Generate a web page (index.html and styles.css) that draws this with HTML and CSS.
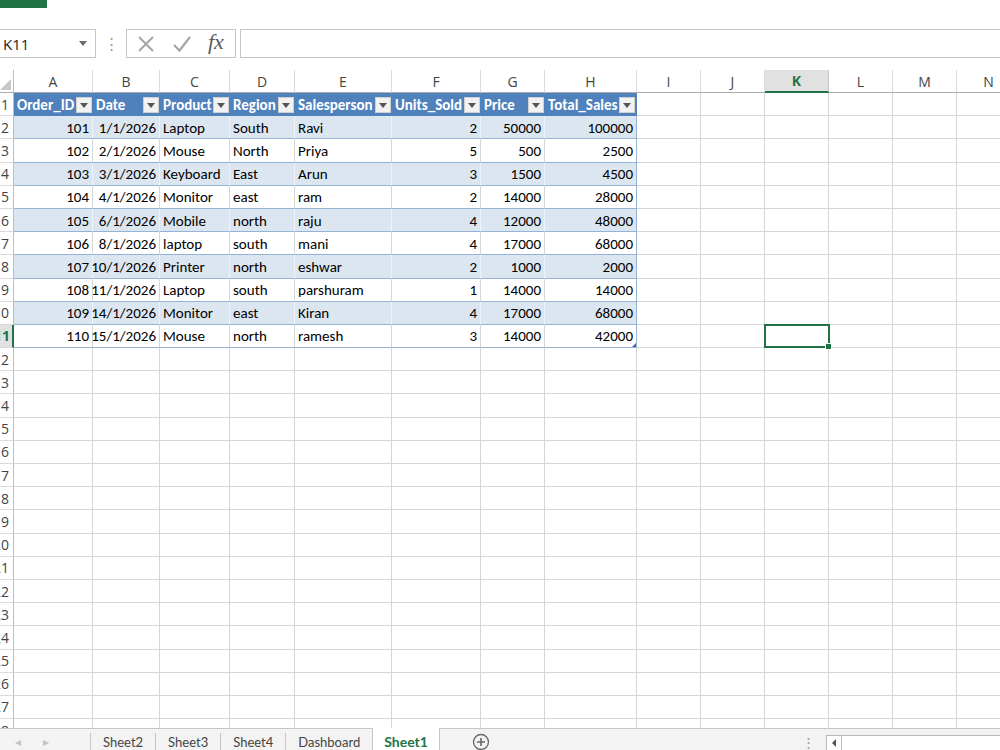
FILE: index.html
```html
<!DOCTYPE html>
<html>
<head>
<meta charset="utf-8">
<link rel="stylesheet" href="styles.css">
</head>
<body>
<div class="app">
  <div class="ribbon"><div class="brand"></div></div>
  <div class="fbar">
    <div class="namebox"><span>K11</span><span class="nb-arrow"></span></div>
    <div class="grip">⋮</div>
    <div class="fbtns">
      <svg class="ico" width="20" height="20" viewBox="0 0 20 20"><path d="M3 3 L17 17 M17 3 L3 17" stroke="#a6a6a6" stroke-width="2" fill="none"/></svg>
      <svg class="ico" width="20" height="20" viewBox="0 0 20 20"><path d="M2 11 L7.5 16.5 L18 3" stroke="#a6a6a6" stroke-width="2.2" fill="none"/></svg>
      <span class="fx">fx</span>
    </div>
    <div class="finput"></div>
  </div>
  <div class="sheet">
    <div class="row colhdr">
      <div class="corner"></div>
      <div class="ch">A</div><div class="ch">B</div><div class="ch">C</div><div class="ch">D</div><div class="ch">E</div><div class="ch">F</div><div class="ch">G</div><div class="ch">H</div><div class="ch">I</div><div class="ch">J</div><div class="ch sel">K</div><div class="ch">L</div><div class="ch">M</div><div class="ch">N</div>
    </div>
    <div class="row">
      <div class="rh">1</div>
      <div class="hd"><span>Order_ID</span><span class="fb"></span></div>
      <div class="hd"><span>Date</span><span class="fb"></span></div>
      <div class="hd"><span>Product</span><span class="fb"></span></div>
      <div class="hd"><span>Region</span><span class="fb"></span></div>
      <div class="hd"><span>Salesperson</span><span class="fb"></span></div>
      <div class="hd"><span>Units_Sold</span><span class="fb"></span></div>
      <div class="hd"><span>Price</span><span class="fb"></span></div>
      <div class="hd last"><span>Total_Sales</span><span class="fb"></span></div>
      <div class="c"></div><div class="c"></div><div class="c"></div><div class="c"></div><div class="c"></div><div class="c"></div>
    </div>
    <div class="row band">
      <div class="rh">2</div>
      <div class="t n">101</div><div class="t n">1/1/2026</div><div class="t">Laptop</div><div class="t">South</div><div class="t">Ravi</div><div class="t n">2</div><div class="t n">50000</div><div class="t n last">100000</div>
      <div class="c"></div><div class="c"></div><div class="c"></div><div class="c"></div><div class="c"></div><div class="c"></div>
    </div>
    <div class="row">
      <div class="rh">3</div>
      <div class="t n">102</div><div class="t n">2/1/2026</div><div class="t">Mouse</div><div class="t">North</div><div class="t">Priya</div><div class="t n">5</div><div class="t n">500</div><div class="t n last">2500</div>
      <div class="c"></div><div class="c"></div><div class="c"></div><div class="c"></div><div class="c"></div><div class="c"></div>
    </div>
    <div class="row band">
      <div class="rh">4</div>
      <div class="t n">103</div><div class="t n">3/1/2026</div><div class="t">Keyboard</div><div class="t">East</div><div class="t">Arun</div><div class="t n">3</div><div class="t n">1500</div><div class="t n last">4500</div>
      <div class="c"></div><div class="c"></div><div class="c"></div><div class="c"></div><div class="c"></div><div class="c"></div>
    </div>
    <div class="row">
      <div class="rh">5</div>
      <div class="t n">104</div><div class="t n">4/1/2026</div><div class="t">Monitor</div><div class="t">east</div><div class="t">ram</div><div class="t n">2</div><div class="t n">14000</div><div class="t n last">28000</div>
      <div class="c"></div><div class="c"></div><div class="c"></div><div class="c"></div><div class="c"></div><div class="c"></div>
    </div>
    <div class="row band">
      <div class="rh">6</div>
      <div class="t n">105</div><div class="t n">6/1/2026</div><div class="t">Mobile</div><div class="t">north</div><div class="t">raju</div><div class="t n">4</div><div class="t n">12000</div><div class="t n last">48000</div>
      <div class="c"></div><div class="c"></div><div class="c"></div><div class="c"></div><div class="c"></div><div class="c"></div>
    </div>
    <div class="row">
      <div class="rh">7</div>
      <div class="t n">106</div><div class="t n">8/1/2026</div><div class="t">laptop</div><div class="t">south</div><div class="t">mani</div><div class="t n">4</div><div class="t n">17000</div><div class="t n last">68000</div>
      <div class="c"></div><div class="c"></div><div class="c"></div><div class="c"></div><div class="c"></div><div class="c"></div>
    </div>
    <div class="row band">
      <div class="rh">8</div>
      <div class="t n">107</div><div class="t n">10/1/2026</div><div class="t">Printer</div><div class="t">north</div><div class="t">eshwar</div><div class="t n">2</div><div class="t n">1000</div><div class="t n last">2000</div>
      <div class="c"></div><div class="c"></div><div class="c"></div><div class="c"></div><div class="c"></div><div class="c"></div>
    </div>
    <div class="row">
      <div class="rh">9</div>
      <div class="t n">108</div><div class="t n">11/1/2026</div><div class="t">Laptop</div><div class="t">south</div><div class="t">parshuram</div><div class="t n">1</div><div class="t n">14000</div><div class="t n last">14000</div>
      <div class="c"></div><div class="c"></div><div class="c"></div><div class="c"></div><div class="c"></div><div class="c"></div>
    </div>
    <div class="row band">
      <div class="rh">10</div>
      <div class="t n">109</div><div class="t n">14/1/2026</div><div class="t">Monitor</div><div class="t">east</div><div class="t">Kiran</div><div class="t n">4</div><div class="t n">17000</div><div class="t n last">68000</div>
      <div class="c"></div><div class="c"></div><div class="c"></div><div class="c"></div><div class="c"></div><div class="c"></div>
    </div>
    <div class="row endrow">
      <div class="rh cur">11</div>
      <div class="t n">110</div><div class="t n">15/1/2026</div><div class="t">Mouse</div><div class="t">north</div><div class="t">ramesh</div><div class="t n">3</div><div class="t n">14000</div><div class="t n last grip-end">42000</div>
      <div class="c"></div><div class="c"></div><div class="c active"></div><div class="c"></div><div class="c"></div><div class="c"></div>
    </div>
    <div class="row"><div class="rh">12</div><div class="c"></div><div class="c"></div><div class="c"></div><div class="c"></div><div class="c"></div><div class="c"></div><div class="c"></div><div class="c"></div><div class="c"></div><div class="c"></div><div class="c"></div><div class="c"></div><div class="c"></div><div class="c"></div></div>
    <div class="row"><div class="rh">13</div><div class="c"></div><div class="c"></div><div class="c"></div><div class="c"></div><div class="c"></div><div class="c"></div><div class="c"></div><div class="c"></div><div class="c"></div><div class="c"></div><div class="c"></div><div class="c"></div><div class="c"></div><div class="c"></div></div>
    <div class="row"><div class="rh">14</div><div class="c"></div><div class="c"></div><div class="c"></div><div class="c"></div><div class="c"></div><div class="c"></div><div class="c"></div><div class="c"></div><div class="c"></div><div class="c"></div><div class="c"></div><div class="c"></div><div class="c"></div><div class="c"></div></div>
    <div class="row"><div class="rh">15</div><div class="c"></div><div class="c"></div><div class="c"></div><div class="c"></div><div class="c"></div><div class="c"></div><div class="c"></div><div class="c"></div><div class="c"></div><div class="c"></div><div class="c"></div><div class="c"></div><div class="c"></div><div class="c"></div></div>
    <div class="row"><div class="rh">16</div><div class="c"></div><div class="c"></div><div class="c"></div><div class="c"></div><div class="c"></div><div class="c"></div><div class="c"></div><div class="c"></div><div class="c"></div><div class="c"></div><div class="c"></div><div class="c"></div><div class="c"></div><div class="c"></div></div>
    <div class="row"><div class="rh">17</div><div class="c"></div><div class="c"></div><div class="c"></div><div class="c"></div><div class="c"></div><div class="c"></div><div class="c"></div><div class="c"></div><div class="c"></div><div class="c"></div><div class="c"></div><div class="c"></div><div class="c"></div><div class="c"></div></div>
    <div class="row"><div class="rh">18</div><div class="c"></div><div class="c"></div><div class="c"></div><div class="c"></div><div class="c"></div><div class="c"></div><div class="c"></div><div class="c"></div><div class="c"></div><div class="c"></div><div class="c"></div><div class="c"></div><div class="c"></div><div class="c"></div></div>
    <div class="row"><div class="rh">19</div><div class="c"></div><div class="c"></div><div class="c"></div><div class="c"></div><div class="c"></div><div class="c"></div><div class="c"></div><div class="c"></div><div class="c"></div><div class="c"></div><div class="c"></div><div class="c"></div><div class="c"></div><div class="c"></div></div>
    <div class="row"><div class="rh">20</div><div class="c"></div><div class="c"></div><div class="c"></div><div class="c"></div><div class="c"></div><div class="c"></div><div class="c"></div><div class="c"></div><div class="c"></div><div class="c"></div><div class="c"></div><div class="c"></div><div class="c"></div><div class="c"></div></div>
    <div class="row"><div class="rh">21</div><div class="c"></div><div class="c"></div><div class="c"></div><div class="c"></div><div class="c"></div><div class="c"></div><div class="c"></div><div class="c"></div><div class="c"></div><div class="c"></div><div class="c"></div><div class="c"></div><div class="c"></div><div class="c"></div></div>
    <div class="row"><div class="rh">22</div><div class="c"></div><div class="c"></div><div class="c"></div><div class="c"></div><div class="c"></div><div class="c"></div><div class="c"></div><div class="c"></div><div class="c"></div><div class="c"></div><div class="c"></div><div class="c"></div><div class="c"></div><div class="c"></div></div>
    <div class="row"><div class="rh">23</div><div class="c"></div><div class="c"></div><div class="c"></div><div class="c"></div><div class="c"></div><div class="c"></div><div class="c"></div><div class="c"></div><div class="c"></div><div class="c"></div><div class="c"></div><div class="c"></div><div class="c"></div><div class="c"></div></div>
    <div class="row"><div class="rh">24</div><div class="c"></div><div class="c"></div><div class="c"></div><div class="c"></div><div class="c"></div><div class="c"></div><div class="c"></div><div class="c"></div><div class="c"></div><div class="c"></div><div class="c"></div><div class="c"></div><div class="c"></div><div class="c"></div></div>
    <div class="row"><div class="rh">25</div><div class="c"></div><div class="c"></div><div class="c"></div><div class="c"></div><div class="c"></div><div class="c"></div><div class="c"></div><div class="c"></div><div class="c"></div><div class="c"></div><div class="c"></div><div class="c"></div><div class="c"></div><div class="c"></div></div>
    <div class="row"><div class="rh">26</div><div class="c"></div><div class="c"></div><div class="c"></div><div class="c"></div><div class="c"></div><div class="c"></div><div class="c"></div><div class="c"></div><div class="c"></div><div class="c"></div><div class="c"></div><div class="c"></div><div class="c"></div><div class="c"></div></div>
    <div class="row"><div class="rh">27</div><div class="c"></div><div class="c"></div><div class="c"></div><div class="c"></div><div class="c"></div><div class="c"></div><div class="c"></div><div class="c"></div><div class="c"></div><div class="c"></div><div class="c"></div><div class="c"></div><div class="c"></div><div class="c"></div></div>
    <div class="row"><div class="rh">28</div><div class="c"></div><div class="c"></div><div class="c"></div><div class="c"></div><div class="c"></div><div class="c"></div><div class="c"></div><div class="c"></div><div class="c"></div><div class="c"></div><div class="c"></div><div class="c"></div><div class="c"></div><div class="c"></div></div>
  </div>
  <div class="tabbar">
    <div class="nav"><span>◂</span><span>▸</span></div>
    <div class="tabs">
      <div class="tab">Sheet2</div>
      <div class="tab">Sheet3</div>
      <div class="tab">Sheet4</div>
      <div class="tab">Dashboard</div>
      <div class="tab on">Sheet1</div>
    </div>
    <div class="add">
      <svg width="18" height="18" viewBox="0 0 18 18"><circle cx="9" cy="9" r="7.5" fill="none" stroke="#666" stroke-width="1.3"/><path d="M9 5 V13 M5 9 H13" stroke="#666" stroke-width="1.6"/></svg>
    </div>
    <div class="spacer"></div>
    <div class="tgrip">⋮</div>
    <div class="hscroll"><span class="larr"></span><span class="thumb"></span></div>
  </div>
</div>
</body>
</html>
```
FILE: styles.css
```css
:root {
  --cols: 14px 79px 67px 70px 65px 97px 89px 64px 92px 64px 64px 64px 64px 64px 64px;
  --grid: #d6d6d6;
  --green: #217346;
}
* { box-sizing: border-box; }
html, body { margin: 0; padding: 0; background: #fff; }
body {
  width: 1000px;
  height: 750px;
  overflow: hidden;
  font-family: Carlito, Lato, "Liberation Sans", sans-serif;
  color: #000;
}
.app { display: flex; flex-direction: column; height: 750px; }

.ribbon { height: 29px; }
.brand { width: 47px; height: 8px; background: var(--green); }

.fbar {
  height: 29px;
  display: flex;
  align-items: stretch;
  margin-bottom: 12px;
}
.namebox {
  width: 97px;
  margin-left: -1px;
  border: 1px solid #c6c6c6;
  display: flex;
  align-items: center;
  justify-content: space-between;
  padding: 0 8px 0 3px;
  font-family: "Segoe UI", "Open Sans", Lato, sans-serif;
  font-size: 15px;
  color: #222;
}
.nb-arrow {
  width: 0; height: 0;
  border-left: 4px solid transparent;
  border-right: 4px solid transparent;
  border-top: 5px solid #6b6b6b;
}
.grip {
  width: 30px;
  display: flex; align-items: center; justify-content: center;
  color: #9a9a9a;
  font-size: 15px;
}
.fbtns {
  width: 110px;
  border: 1px solid #c6c6c6;
  display: flex;
  align-items: center;
  padding-left: 9px;
  gap: 16px;
}
.ico { display: block; }
.fx {
  font-family: "Liberation Serif", serif;
  font-style: italic;
  font-size: 22px;
  color: #5a5a5a;
  line-height: 1;
  margin-top: -3px;
}
.finput {
  flex: 1;
  margin-left: 4px;
  border: 1px solid #c6c6c6;
  border-right: none;
}

.sheet {
  height: 658px;
  overflow: hidden;
  position: relative;
}
.row {
  display: grid;
  grid-template-columns: var(--cols);
  width: 1021px;
  height: 23.2px;
  font-size: 15px;
}
.colhdr { height: 23px; }
.corner {
  border-right: 1px solid #bdbdbd;
  border-bottom: 1px solid #ababab;
  position: relative;
  overflow: hidden;
}
.corner::after {
  content: "";
  position: absolute;
  right: 2px; bottom: 2px;
  width: 0; height: 0;
  border-left: 11px solid transparent;
  border-bottom: 11px solid #c8c8c8;
}
.ch {
  border-right: 1px solid #dadada;
  border-bottom: 1px solid #ababab;
  display: flex; align-items: center; justify-content: center;
  color: #444;
  font-size: 14px;
  font-family: "Segoe UI", "Open Sans", Lato, sans-serif;
}
.ch.sel {
  background: #e1e1e1;
  color: var(--green);
  font-weight: bold;
  border-bottom: 2px solid var(--green);
  border-right-color: #c6c6c6;
}
.rh {
  border-right: 1px solid #bdbdbd;
  border-bottom: 1px solid #dadada;
  display: flex; align-items: center; justify-content: flex-end;
  padding-right: 4px;
  color: #444;
  font-size: 14px;
  font-family: "Segoe UI", "Open Sans", Lato, sans-serif;
  overflow: hidden;
  white-space: nowrap;
}
.rh.cur {
  background: #e1e1e1;
  color: var(--green);
  font-weight: bold;
  border-right: 2px solid var(--green);
  padding-right: 2px;
}
.c {
  border-right: 1px solid var(--grid);
  border-bottom: 1px solid var(--grid);
}
.hd {
  background: #4f81bd;
  color: #fff;
  font-weight: bold;
  display: flex;
  align-items: center;
  justify-content: space-between;
  padding: 0 1px 0 3px;
  white-space: nowrap;
  overflow: hidden;
}
.hd.last { border-right: 1px solid #4f81bd; }
.fb {
  width: 16px; height: 16px;
  flex: none;
  background: #f2f2f2;
  border: 1px solid #d0d0d0;
  position: relative;
}
.fb::after {
  content: "";
  position: absolute;
  left: 3px; top: 5px;
  border-left: 4px solid transparent;
  border-right: 4px solid transparent;
  border-top: 5px solid #555;
}
.t {
  border-right: 1px solid var(--grid);
  border-bottom: 1px solid #95b3d7;
  display: flex; align-items: center;
  padding: 1px 3px 0;
  white-space: nowrap;
}
.band .t { background: #dce6f1; border-right-color: #eef3f9; }
.t.n { justify-content: flex-end; }
.t.last { border-right: 1px solid #95b3d7; }
.band .t.last { border-right-color: #95b3d7; }
.grip-end { position: relative; }
.grip-end::after {
  content: "";
  position: absolute;
  right: 0; bottom: 0;
  border-left: 4px solid transparent;
  border-bottom: 4px solid #3f63b0;
}
.active { position: relative; }
.active::before {
  content: "";
  position: absolute;
  left: -1px; top: -1px; right: -2px; bottom: -1px;
  border: 2px solid var(--green);
  z-index: 2;
}
.active::after {
  content: "";
  position: absolute;
  right: -4px; bottom: -3px;
  width: 5px; height: 5px;
  background: var(--green);
  border: 1px solid #fff;
  box-sizing: content-box;
  z-index: 3;
}

.tabbar {
  height: 22px;
  background: #f3f3f3;
  border-top: 1px solid #c6c6c6;
  display: flex;
  align-items: stretch;
  font-family: Lato, "Open Sans", sans-serif;
  font-size: 13px;
  color: #444;
}
.nav {
  width: 90px;
  display: flex;
  align-items: center;
  padding-left: 15px;
  gap: 22px;
  color: #c4c4c4;
  font-size: 12px;
  padding-top: 3px;
}
.tabs { display: flex; align-items: stretch; }
.tab {
  border-left: 1px solid #c6c6c6;
  margin-top: 4px;
  padding: 2px 12px 0 12px;
  display: flex;
  align-items: center;
  line-height: 1;
}
.tab.on {
  background: #fff;
  color: var(--green);
  font-weight: bold;
  font-size: 14px;
  margin-top: -1px;
  padding: 6px 11px 0 11px;
  border-right: 1px solid #c6c6c6;
}
.add {
  display: flex; align-items: center;
  padding-left: 32px;
  padding-top: 4px;
}
.spacer { flex: 1; }
.tgrip {
  width: 36px;
  display: flex; align-items: center; justify-content: center;
  color: #9a9a9a;
  padding-top: 4px;
}
.hscroll {
  width: 174px;
  margin-top: 6px;
  border: 1px solid #b9b9b9;
  border-bottom: none;
  border-right: none;
  background: #fff;
  display: flex;
  align-items: center;
}
.larr {
  width: 0; height: 0;
  margin-left: 5px;
  border-top: 4px solid transparent;
  border-bottom: 4px solid transparent;
  border-right: 4px solid #555;
}
.thumb {
  margin-left: 5px;
  height: 100%;
  border-left: 1px solid #b9b9b9;
}
```
